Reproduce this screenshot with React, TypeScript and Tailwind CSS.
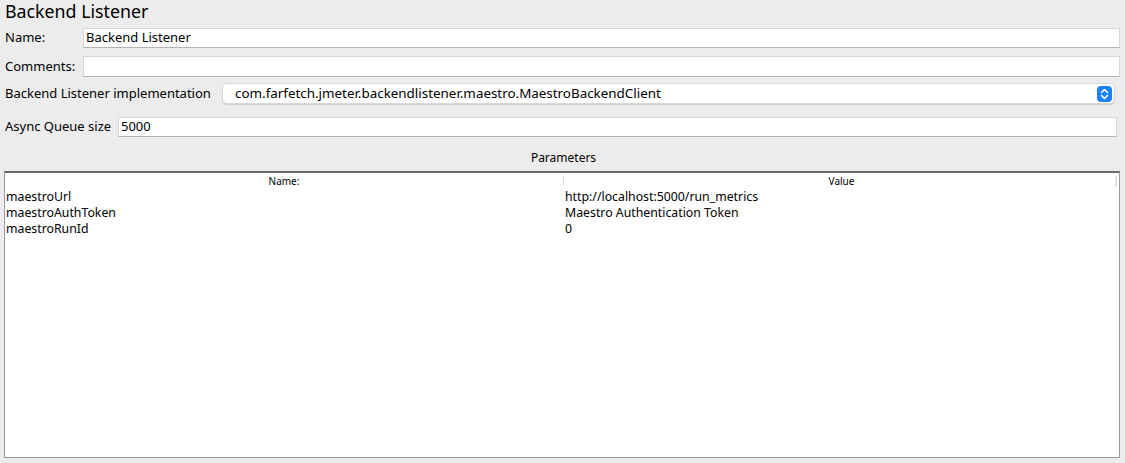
import { FC } from 'react'

const font = { fontFamily: '"Noto Sans", "DejaVu Sans", sans-serif' }

const TextField: FC<{ value?: string; className?: string }> = ({ value, className }) => (
    <div className={`h-[20px] bg-white border border-[#d6d6d6] border-b-[#b4b4b4] flex items-center px-[2px] text-[13px] text-black ${className ?? ''}`}>
        {value}
    </div>
)

const params = [
    { name: 'maestroUrl', value: 'http://localhost:5000/run_metrics' },
    { name: 'maestroAuthToken', value: 'Maestro Authentication Token' },
    { name: 'maestroRunId', value: '0' },
]

export default function App() {
    return (
        <div className="w-[1125px] h-[463px] bg-[#ececec] text-black overflow-hidden flex flex-col" style={font}>
            <div className="h-[27px] pl-[5px] text-[17.8px] leading-[22px]">Backend Listener</div>

            <div className="flex items-center h-[20px] mt-[1px]">
                <span className="w-[83px] pl-[5px] text-[13px]">Name:</span>
                <TextField value="Backend Listener" className="flex-1 mr-[5px]" />
            </div>

            <div className="flex items-center h-[21px] mt-[8px]">
                <span className="w-[83px] pl-[5px] text-[13px]">Comments:</span>
                <TextField className="flex-1 mr-[5px] h-[21px]" />
            </div>

            <div className="flex items-center h-[21px] mt-[6px]">
                <span className="w-[222px] pl-[5px] text-[13px]">Backend Listener implementation</span>
                <div className="flex-1 mr-[10px] h-[21px] bg-white rounded-[5px] border border-[#d8d8d8] shadow-[0_1px_1px_rgba(0,0,0,0.12)] flex items-center justify-between pl-[12px] pr-[2px] text-[13.4px]">
                    <span>com.farfetch.jmeter.backendlistener.maestro.MaestroBackendClient</span>
                    <div className="w-[15px] h-[16px] rounded-[4px] bg-[#1a82fb] flex items-center justify-center">
                        <svg width="9" height="12" viewBox="0 0 9 12" fill="none" stroke="white" strokeWidth="1.6" strokeLinecap="round" strokeLinejoin="round">
                            <path d="M1.5 4.5 L4.5 1.5 L7.5 4.5" />
                            <path d="M1.5 7.5 L4.5 10.5 L7.5 7.5" />
                        </svg>
                    </div>
                </div>
            </div>

            <div className="flex items-center h-[20px] mt-[13px]">
                <span className="w-[118px] pl-[5px] text-[13px]">Async Queue size</span>
                <TextField value="5000" className="flex-1 mr-[8px]" />
            </div>

            <div className="text-center text-[12px] leading-[16px] mt-[13px] pl-[2px]">Parameters</div>

            <div className="flex-1 ml-[4px] mr-[5px] mt-[5px] mb-[5px] bg-white border border-[#999] border-t-[#6a6a6a] border-t-2 flex flex-col relative">
                <div className="flex h-[15px] text-[10px] leading-[15px] mt-[1px]">
                    <div className="w-[558px] text-center">Name:</div>
                    <div className="w-px h-[9px] bg-[#d8d8d8] mt-[2px]" />
                    <div className="flex-1 text-center">Value</div>
                </div>
                {params.map((p) => (
                    <div key={p.name} className="flex h-[16px] text-[12.3px] leading-[16px]">
                        <div className="w-[559px] pl-[1px]">{p.name}</div>
                        <div className="flex-1 pl-[1px]">{p.value}</div>
                    </div>
                ))}
                <div className="absolute right-[2px] top-[3px] w-[2px] h-[11px] bg-[#e2e2e2]" />
            </div>
        </div>
    )
}
